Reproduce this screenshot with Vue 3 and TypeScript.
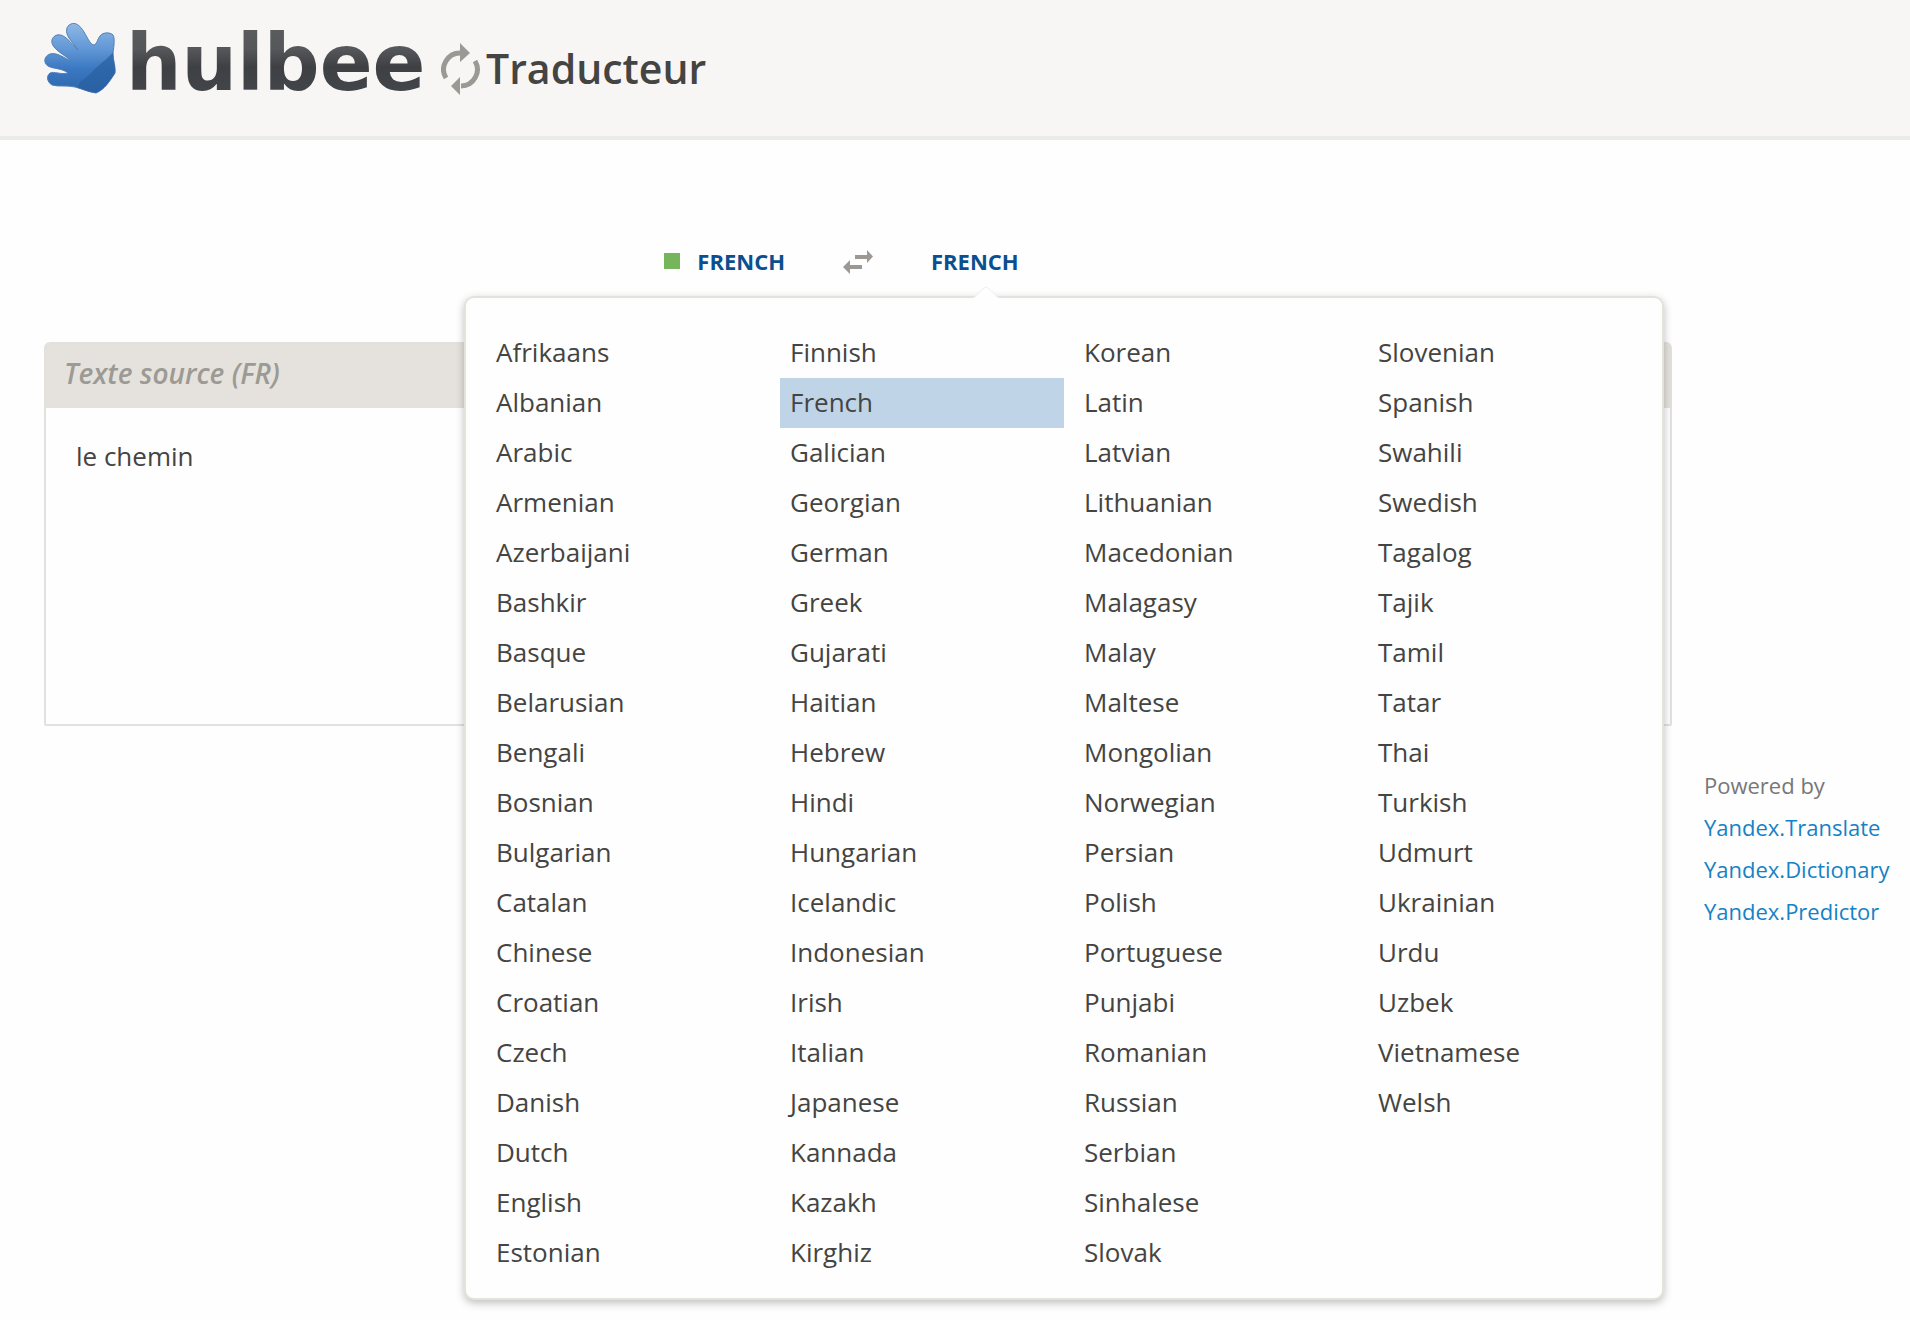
<script setup lang="ts">
import { ref } from 'vue'

const languages: string[] = [
  'Afrikaans', 'Albanian', 'Arabic', 'Armenian', 'Azerbaijani', 'Bashkir', 'Basque',
  'Belarusian', 'Bengali', 'Bosnian', 'Bulgarian', 'Catalan', 'Chinese', 'Croatian',
  'Czech', 'Danish', 'Dutch', 'English', 'Estonian',
  'Finnish', 'French', 'Galician', 'Georgian', 'German', 'Greek', 'Gujarati',
  'Haitian', 'Hebrew', 'Hindi', 'Hungarian', 'Icelandic', 'Indonesian', 'Irish',
  'Italian', 'Japanese', 'Kannada', 'Kazakh', 'Kirghiz',
  'Korean', 'Latin', 'Latvian', 'Lithuanian', 'Macedonian', 'Malagasy', 'Malay',
  'Maltese', 'Mongolian', 'Norwegian', 'Persian', 'Polish', 'Portuguese', 'Punjabi',
  'Romanian', 'Russian', 'Serbian', 'Sinhalese', 'Slovak',
  'Slovenian', 'Spanish', 'Swahili', 'Swedish', 'Tagalog', 'Tajik', 'Tamil', 'Tatar',
  'Thai', 'Turkish', 'Udmurt', 'Ukrainian', 'Urdu', 'Uzbek', 'Vietnamese', 'Welsh',
]

const services: string[] = ['Yandex.Translate', 'Yandex.Dictionary', 'Yandex.Predictor']

const source = ref('French')
const target = ref('French')
const text = ref('le chemin')
const result = ref('')
const open = ref(true)

function swap(): void {
  const previous = source.value
  source.value = target.value
  target.value = previous
}

function choose(language: string): void {
  target.value = language
  open.value = false
}
</script>

<template>
  <div class="page">
    <header class="top">
      <a class="logo" href="#" aria-label="hulbee">
        <svg class="hand" viewBox="0 0 72 72" aria-hidden="true">
          <defs>
            <linearGradient id="hand-fill" x1="0" y1="0" x2="0" y2="1">
              <stop offset="0" stop-color="#8fb8e6" />
              <stop offset="0.35" stop-color="#6399d6" />
              <stop offset="0.65" stop-color="#3b78c2" />
              <stop offset="1" stop-color="#2c66ab" />
            </linearGradient>
            <clipPath id="hand-shape">
              <path d="M50 23C47 23 44 17 40 10C36 3 31 0 27 2C22 4 21 10 25 16L34 28C27 21 20 11 13 13C7 15 6 21 11 26C15 31 21 33 27 39C20 36 13 30 6 32C0 34 -1 41 4 44C9 47 18 46 24 51C17 53 10 49 6 51C2 54 3 60 8 63C14 65 23 63 31 65C39 67 44 70 52 71C60 68 66 59 71 51C72 45 69 39 69 31C70 24 71 16 69 13C66 10 59 10 56 14C53 18 53 22 50 23Z" />
            </clipPath>
          </defs>
          <path class="hand-outline" d="M50 23C47 23 44 17 40 10C36 3 31 0 27 2C22 4 21 10 25 16L34 28C27 21 20 11 13 13C7 15 6 21 11 26C15 31 21 33 27 39C20 36 13 30 6 32C0 34 -1 41 4 44C9 47 18 46 24 51C17 53 10 49 6 51C2 54 3 60 8 63C14 65 23 63 31 65C39 67 44 70 52 71C60 68 66 59 71 51C72 45 69 39 69 31C70 24 71 16 69 13C66 10 59 10 56 14C53 18 53 22 50 23Z" />
          <path clip-path="url(#hand-shape)" fill="#285f9f" fill-opacity="0.7" d="M72 26C66 36 57 40 48 50C44 54 40 57 36 60L30 73H72Z" />
        </svg>
        <svg class="wordmark" viewBox="0 0 306 100" aria-hidden="true">
          <defs>
            <linearGradient id="word-fill" gradientUnits="userSpaceOnUse" x1="0" y1="16" x2="0" y2="78">
              <stop offset="0" stop-color="#5a5b5d" />
              <stop offset="0.3" stop-color="#55575a" />
              <stop offset="0.6" stop-color="#3e4044" />
              <stop offset="1" stop-color="#424549" />
            </linearGradient>
          </defs>
          <text x="2" y="76">hulbee</text>
        </svg>
      </a>
      <svg class="cycle" viewBox="0 0 40 52" aria-hidden="true">
        <g fill="none" stroke="#9c9893" stroke-width="5">
          <path d="M5 35A16.500 16.500 0 0 1 20 10" />
          <path d="M34 18A16.500 16.500 0 0 1 20 43" />
        </g>
        <path fill="#9c9893" d="M19 0L29 10L19 19ZM19 34L10 43L19 52Z" />
      </svg>
      <h1>Traducteur</h1>
    </header>

    <main class="content">
      <section class="translator">
        <div class="directions">
          <button type="button" class="language from">
            <span class="marker"></span>{{ source }}
          </button>
          <button type="button" class="swap" aria-label="Swap" @click="swap">
            <svg viewBox="0 0 30 24" aria-hidden="true">
              <path fill="#9c9893" d="M12 5H24V0L30 6.500L24 13V9H12ZM19 15H7V10L0 17L7 24V19H19Z" />
            </svg>
          </button>
          <div class="target">
            <button type="button" class="language" :aria-expanded="open" @click="open = !open">
              {{ target }}
            </button>
          </div>
          <div v-if="open" class="menu">
            <svg class="notch" viewBox="0 0 26 13" aria-hidden="true">
              <path fill="#fefefe" d="M0 13L11 2Q13 0 15 2L26 13Z" />
              <path fill="none" stroke="#eeeeeb" d="M0 12L11 2Q13 0 15 2L26 12" />
            </svg>
            <ul class="languages">
              <li v-for="language in languages" :key="language">
                <button
                  type="button"
                  :class="{ selected: language === target }"
                  @click="choose(language)"
                >{{ language }}</button>
              </li>
            </ul>
          </div>
        </div>

        <div class="panels">
          <div class="panel">
            <label for="source-text">Texte source (FR)</label>
            <textarea id="source-text" v-model="text" spellcheck="false"></textarea>
          </div>
          <div class="panel">
            <div class="panel-head"></div>
            <textarea v-model="result" aria-label="Traduction" readonly></textarea>
          </div>
        </div>
      </section>

      <aside class="credits">
        <p>Powered by</p>
        <a v-for="service in services" :key="service" href="#">{{ service }}</a>
      </aside>
    </main>
  </div>
</template>

<style>
body {
  margin: 0;
  background: #fefefe;
}
</style>

<style scoped>
* {
  box-sizing: border-box;
}

.page {
  min-height: 100vh;
  color: #444442;
  font-family: "Open Sans", "Noto Sans", sans-serif;
  font-size: 26px;
}

button,
textarea {
  margin: 0;
  padding: 0;
  border: 0;
  background: none;
  color: inherit;
  font: inherit;
}

button {
  cursor: pointer;
}

.top {
  display: flex;
  align-items: flex-start;
  height: 140px;
  padding: 14px 44px 0;
  border-bottom: 4px solid #ebebe9;
  background: #f8f6f4;
}

.logo {
  display: flex;
  gap: 8px;
}

.hand {
  width: 72px;
  height: 72px;
  margin-top: 8px;
}

.hand-outline {
  fill: url(#hand-fill);
  stroke: #527fb4;
  stroke-width: 1;
}

.wordmark {
  width: 306px;
  height: 100px;
}

.wordmark text {
  fill: url(#word-fill);
  font-family: "DejaVu Sans", sans-serif;
  font-size: 78px;
  font-weight: 700;
}

.cycle {
  width: 40px;
  height: 52px;
  margin: 29px 5px 0 11px;
}

h1 {
  margin: 24px 0 0;
  font-size: 41px;
  font-weight: 600;
  line-height: 60px;
}

.content {
  display: flex;
  gap: 32px;
  padding: 100px 0 20px 44px;
}

.translator {
  flex: 1;
  min-width: 0;
}

.directions {
  position: relative;
  display: grid;
  grid-template-columns: 1fr auto 1fr;
  align-items: center;
  column-gap: 58px;
  height: 44px;
}

.language {
  display: flex;
  align-items: center;
  color: #0b4f8f;
  font-size: 22px;
  font-weight: 700;
  line-height: 42px;
  padding-bottom: 2px;
  text-transform: uppercase;
}

.from {
  justify-self: end;
  gap: 17px;
}

.marker {
  width: 16px;
  height: 16px;
  background: #76b55b;
}

.swap svg {
  display: block;
  width: 30px;
  height: 24px;
}

.menu {
  position: absolute;
  z-index: 1;
  top: 56px;
  right: 8px;
  width: 1200px;
  padding: 30px 10px 20px 20px;
  border: 2px solid #e3e3de;
  border-radius: 10px;
  background: #fefefe;
  box-shadow: 0 3px 8px rgba(0, 0, 0, 0.25);
}

.notch {
  position: absolute;
  top: -12px;
  left: 507px;
  width: 26px;
  height: 13px;
}

.languages {
  display: grid;
  grid-template-rows: repeat(19, 50px);
  grid-auto-columns: 1fr;
  grid-auto-flow: column;
  column-gap: 10px;
  margin: 0;
  padding: 0;
  list-style: none;
}

.languages button {
  width: 100%;
  height: 50px;
  padding: 0 10px 2px;
  line-height: 48px;
  text-align: left;
}

.languages .selected {
  background: #c0d4e8;
}

.panels {
  display: flex;
  gap: 32px;
  margin-top: 58px;
}

.panel {
  flex: 1;
  border: 2px solid #e3e1dd;
  border-radius: 6px 6px 2px 2px;
}

.panel label,
.panel-head {
  display: block;
  height: 64px;
  padding: 0 18px;
  background: #e5e2dd;
  color: #9c9a94;
  font-size: 28px;
  font-style: italic;
  font-weight: 600;
  line-height: 58px;
}

.panel textarea {
  display: block;
  width: 100%;
  height: 316px;
  padding: 30px;
  line-height: 36px;
  resize: none;
}

.credits {
  width: 206px;
  padding-top: 524px;
  font-size: 22px;
  line-height: 42px;
}

.credits p {
  margin: 0;
  color: #777;
}

.credits a {
  display: block;
  color: #1582c5;
  text-decoration: none;
}
</style>
